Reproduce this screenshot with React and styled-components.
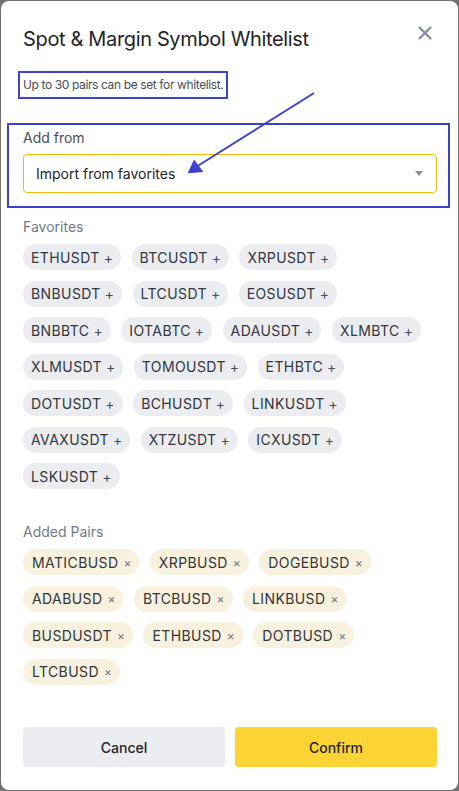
import React from "react";
import styled, { createGlobalStyle } from "styled-components";

const Global = createGlobalStyle`
  html, body { margin: 0; padding: 0; }
  body { background: #727272; font-family: Inter, Roboto, "Noto Sans", Arial, sans-serif; }
  * { box-sizing: border-box; }
`;

const Frame = styled.div`
  position: relative;
  width: 459px;
  height: 791px;
  padding: 1px;
  background: #727272;
`;

const Modal = styled.div`
  height: 789px;
  background: #ffffff;
  border-radius: 8px;
  padding: 24px 21px 23px 22px;
  display: flex;
  flex-direction: column;
`;

const Header = styled.div`
  display: flex;
  justify-content: space-between;
  align-items: flex-start;
`;

const Title = styled.h1`
  margin: 0;
  font-size: 20px;
  line-height: 28px;
  font-weight: 400;
  letter-spacing: -0.35px;
  color: #1e2329;
`;

const CloseButton = styled.button`
  border: 0;
  background: none;
  padding: 0;
  margin: 1px 5px 0 0;
  width: 14px;
  height: 14px;
  display: flex;
  cursor: pointer;
`;

const Hint = styled.div`
  align-self: flex-start;
  margin: 18px 0 0 -5px;
  border: 2px solid #3d41cf;
  padding: 3px 3px 3px 3px;
  font-size: 12px;
  line-height: 18px;
  letter-spacing: -0.38px;
  color: #474d57;
`;

const AnnotBox = styled.div`
  margin: 24px -13px 0 -16px;
  border: 2px solid #3d41cf;
  padding: 3px 11px 13px 14px;
  display: flex;
  flex-direction: column;
  gap: 6px;
`;

const FieldLabel = styled.div`
  font-size: 14px;
  line-height: 20px;
  color: ${(p) => (p.$muted ? "#707a8a" : "#474d57")};
`;

const Select = styled.div`
  height: 39px;
  border: 1px solid #f0b90b;
  border-radius: 4px;
  padding: 0 12px 0 12px;
  display: flex;
  align-items: center;
  justify-content: space-between;
  font-size: 14px;
  color: #1e2329;
`;

const Caret = styled.span`
  width: 0;
  height: 0;
  border-left: 4px solid transparent;
  border-right: 4px solid transparent;
  border-top: 5px solid #848e9c;
  margin-right: 1px;
`;

const Section = styled.div`
  margin-top: ${(p) => p.$mt}px;
  display: flex;
  flex-direction: column;
  gap: 7px;
`;

const ChipRows = styled.div`
  display: flex;
  flex-direction: column;
  gap: 10.5px;
`;

const ChipRow = styled.div`
  display: flex;
  gap: 10.5px;
`;

const Chip = styled.div`
  height: 26px;
  border-radius: 13px;
  padding: 0 8px 0 ${(p) => (p.$added ? 9 : 8)}px;
  display: flex;
  align-items: center;
  font-size: 14px;
  letter-spacing: 0.4px;
  color: #32363d;
  background: ${(p) => (p.$added ? "#f7f1dd" : "#eaecef")};
  white-space: nowrap;
`;

const ChipMark = styled.span`
  margin-left: ${(p) => (p.$added ? 5 : 4)}px;
  letter-spacing: 0;
  font-size: ${(p) => (p.$added ? 12 : 14)}px;
  color: ${(p) => (p.$added ? "#707a8a" : "#474d57")};
`;

const Footer = styled.div`
  margin-top: auto;
  display: grid;
  grid-template-columns: 1fr 1fr;
  gap: 10px;
`;

const Button = styled.button`
  height: 40px;
  border: 0;
  border-radius: 4px;
  font-family: inherit;
  font-size: 14px;
  font-weight: 500;
  color: #1e2329;
  background: ${(p) => (p.$primary ? "#fcd535" : "#eaecef")};
  cursor: pointer;
`;

const Overlay = styled.svg`
  position: absolute;
  left: 0;
  top: 0;
  pointer-events: none;
`;

const favorites = [
  ["ETHUSDT", "BTCUSDT", "XRPUSDT"],
  ["BNBUSDT", "LTCUSDT", "EOSUSDT"],
  ["BNBBTC", "IOTABTC", "ADAUSDT", "XLMBTC"],
  ["XLMUSDT", "TOMOUSDT", "ETHBTC"],
  ["DOTUSDT", "BCHUSDT", "LINKUSDT"],
  ["AVAXUSDT", "XTZUSDT", "ICXUSDT"],
  ["LSKUSDT"],
];

const added = [
  ["MATICBUSD", "XRPBUSD", "DOGEBUSD"],
  ["ADABUSD", "BTCBUSD", "LINKBUSD"],
  ["BUSDUSDT", "ETHBUSD", "DOTBUSD"],
  ["LTCBUSD"],
];

function ChipGroup({ rows, isAdded }) {
  return (
    <ChipRows>
      {rows.map((row, i) => (
        <ChipRow key={i}>
          {row.map((s) => (
            <Chip key={s} $added={isAdded}>
              {s}
              <ChipMark $added={isAdded}>{isAdded ? "×" : "+"}</ChipMark>
            </Chip>
          ))}
        </ChipRow>
      ))}
    </ChipRows>
  );
}

export default function App() {
  return (
    <Frame>
      <Global />
      <Modal>
        <Header>
          <Title>Spot &amp; Margin Symbol Whitelist</Title>
          <CloseButton aria-label="Close">
            <svg width="14" height="14" viewBox="0 0 14 14">
              <path d="M1 1L13 13M13 1L1 13" stroke="#848e9c" strokeWidth="2.4" strokeLinecap="butt" />
            </svg>
          </CloseButton>
        </Header>
        <Hint>Up to 30 pairs can be set for whitelist.</Hint>
        <AnnotBox>
          <FieldLabel>Add from</FieldLabel>
          <Select>
            <span>Import from favorites</span>
            <Caret />
          </Select>
        </AnnotBox>
        <Section $mt={9}>
          <FieldLabel $muted>Favorites</FieldLabel>
          <ChipGroup rows={favorites} />
        </Section>
        <Section $mt={33}>
          <FieldLabel $muted>Added Pairs</FieldLabel>
          <ChipGroup rows={added} isAdded />
        </Section>
        <Footer>
          <Button>Cancel</Button>
          <Button $primary>Confirm</Button>
        </Footer>
      </Modal>
      <Overlay width="459" height="791" viewBox="0 0 459 791">
        <line x1="314" y1="93" x2="196" y2="167" stroke="#3d41cf" strokeWidth="2" />
        <polygon points="187.7,173.3 194,159.5 203.5,172" fill="#3d41cf" />
      </Overlay>
    </Frame>
  );
}
